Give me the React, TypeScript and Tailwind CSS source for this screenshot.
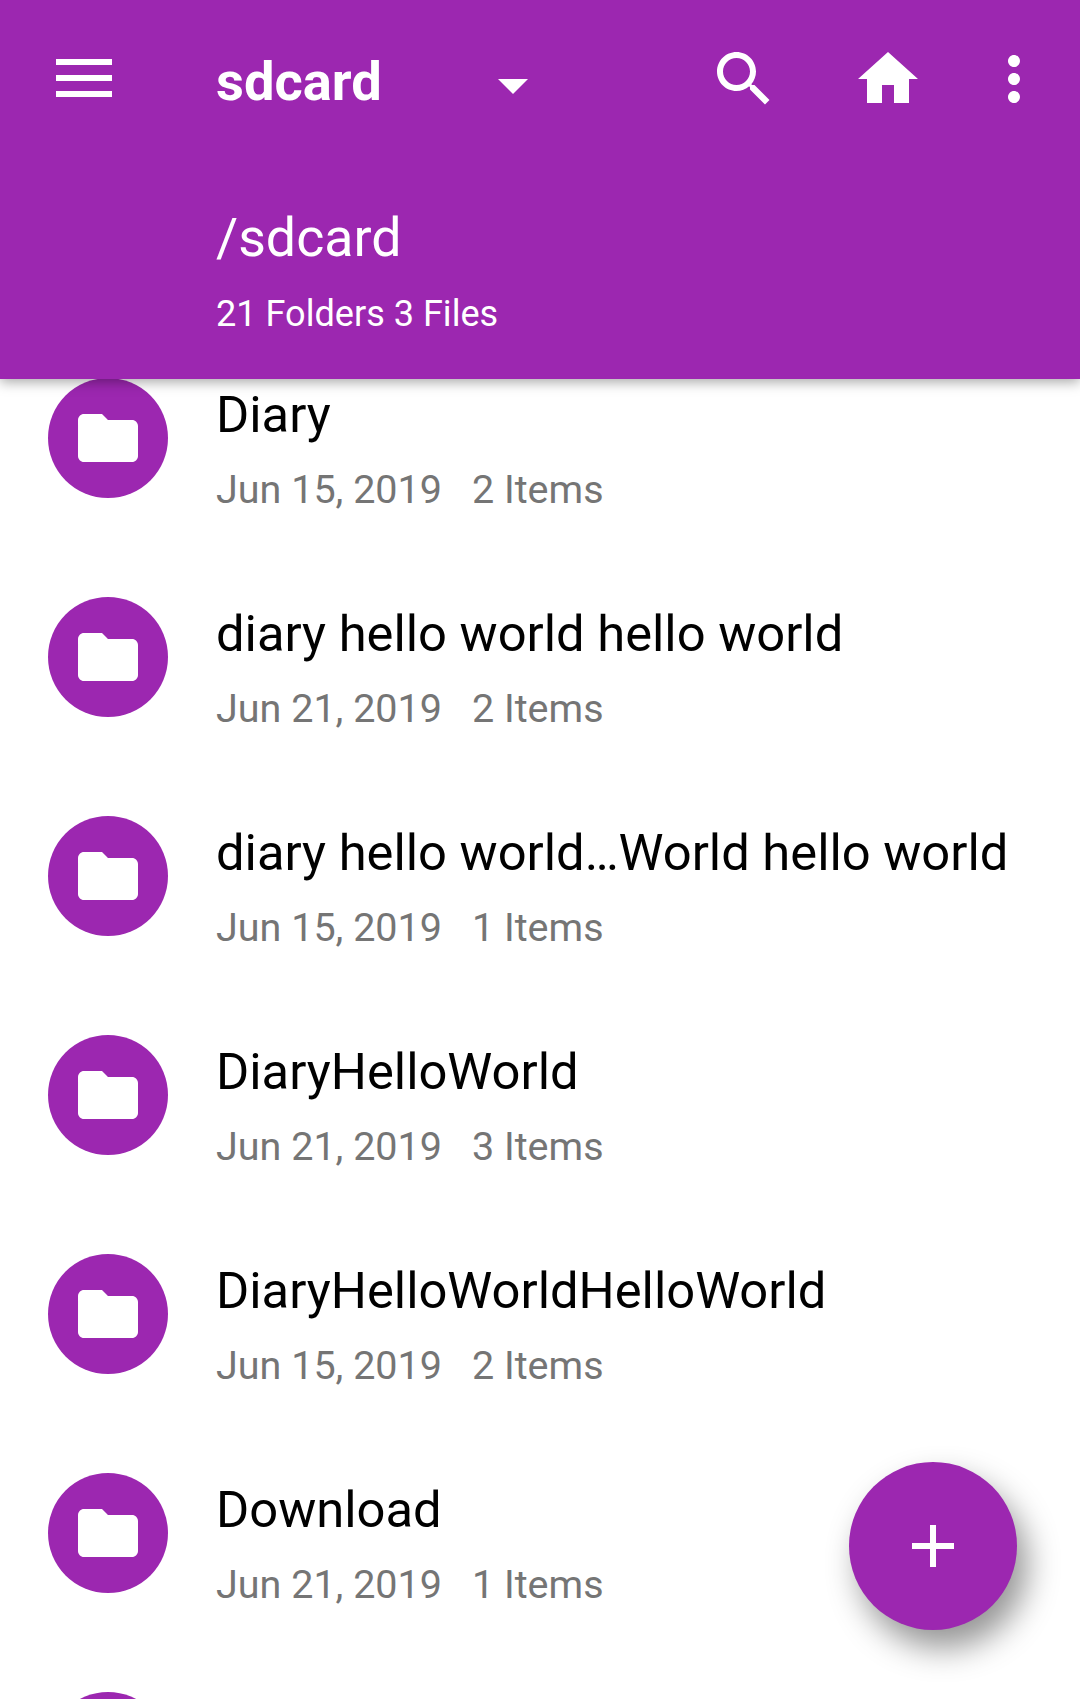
import { Fragment } from 'react';

const folders = [
    { name: 'Diary', date: 'Jun 15, 2019', items: '2 Items' },
    { name: 'diary hello world hello world', date: 'Jun 21, 2019', items: '2 Items' },
    { name: 'diary hello world…World hello world', date: 'Jun 15, 2019', items: '1 Items' },
    { name: 'DiaryHelloWorld', date: 'Jun 21, 2019', items: '3 Items' },
    { name: 'DiaryHelloWorldHelloWorld', date: 'Jun 15, 2019', items: '2 Items' },
    { name: 'Download', date: 'Jun 21, 2019', items: '1 Items' },
];

const Icon = ({ d, className = '' }: { d: string; className?: string }) => (
    <svg viewBox="0 0 24 24" className={`w-[72px] h-[72px] shrink-0 fill-white ${className}`}>
        <path d={d} />
    </svg>
);

const FolderCircle = () => (
    <div className="w-[120px] h-[120px] shrink-0 rounded-full bg-[#9c27b0] flex items-center justify-center">
        <Icon d="M10 4H4c-1.1 0-1.99.9-1.99 2L2 18c0 1.1.9 2 2 2h16c1.1 0 2-.9 2-2V8c0-1.1-.9-2-2-2h-8l-2-2z" />
    </div>
);

const App = () => {
    return (
        <div className="relative w-[1080px] h-[1699px] overflow-hidden bg-white flex flex-col font-['Roboto',sans-serif]">
            {/* 헤더 */}
            <header className="relative z-10 h-[379px] shrink-0 bg-[#9c27b0] text-white shadow-[0_3px_12px_rgba(0,0,0,0.35)]">
                <div className="flex items-start pt-[43px] pl-[45px] pr-[30px]">
                    <svg viewBox="0 0 72 72" className="w-[72px] h-[72px] shrink-0 fill-white">
                        <rect x="11" y="16" width="56" height="6" />
                        <rect x="11" y="32" width="56" height="6" />
                        <rect x="11" y="48" width="56" height="6" />
                    </svg>
                    <div className="ml-[99px] w-[261px] pt-[3px] text-[54.3px] leading-[72px] font-bold">sdcard</div>
                    <Icon d="M7 10l5 5 5-5z" className="mt-[6px]" />
                    <div className="flex-1" />
                    <Icon d="M15.5 14h-.79l-.28-.27C15.41 12.59 16 11.11 16 9.5 16 5.91 13.09 3 9.5 3S3 5.91 3 9.5 5.91 16 9.5 16c1.61 0 3.09-.59 4.23-1.57l.27.28v.79l5 4.99L20.49 19l-4.99-5zm-6 0C7.01 14 5 11.99 5 9.5S7.01 5 9.5 5 14 7.01 14 9.5 11.99 14 9.5 14z" />
                    <Icon d="M10 20v-6h4v6h5v-8h3L12 3 2 12h3v8z" className="ml-[72px]" />
                    <Icon
                        d="M12 8c1.1 0 2-.9 2-2s-.9-2-2-2-2 .9-2 2 .9 2 2 2zm0 2c-1.1 0-2 .9-2 2s.9 2 2 2 2-.9 2-2-.9-2-2-2zm0 6c-1.1 0-2 .9-2 2s.9 2 2 2 2-.9 2-2-.9-2-2-2z"
                        className="ml-[54px]"
                    />
                </div>
                <div className="pl-[216px] mt-[85px]">
                    <div className="text-[53.7px] leading-[64px]">/sdcard</div>
                    <div className="mt-[20px] text-[36.1px] leading-[48px]">21 Folders 3 Files</div>
                </div>
            </header>

            {/* 목록 */}
            <div className="-mt-px flex-1 overflow-hidden">
                {folders.map((folder) => (
                    <Fragment key={folder.name}>
                        <div className="h-[219px] flex items-start pl-[48px]">
                            <FolderCircle />
                            <div className="ml-[48px] pt-[7px]">
                                <div className="text-[50.7px] leading-[60px] text-black whitespace-nowrap">{folder.name}</div>
                                <div className="mt-[21px] flex gap-[30px] text-[39.5px] leading-[48px] text-[#757575]">
                                    <span>{folder.date}</span>
                                    <span>{folder.items}</span>
                                </div>
                            </div>
                        </div>
                    </Fragment>
                ))}
                <div className="pl-[48px]">
                    <FolderCircle />
                </div>
            </div>

            {/* 추가 버튼 */}
            <button className="absolute left-[849px] top-[1462px] w-[168px] h-[168px] rounded-full bg-[#9c27b0] flex items-center justify-center shadow-[10px_18px_32px_rgba(0,0,0,0.42)]">
                <Icon d="M19 13h-6v6h-2v-6H5v-2h6V5h2v6h6v2z" />
            </button>
        </div>
    );
};

export default App;
